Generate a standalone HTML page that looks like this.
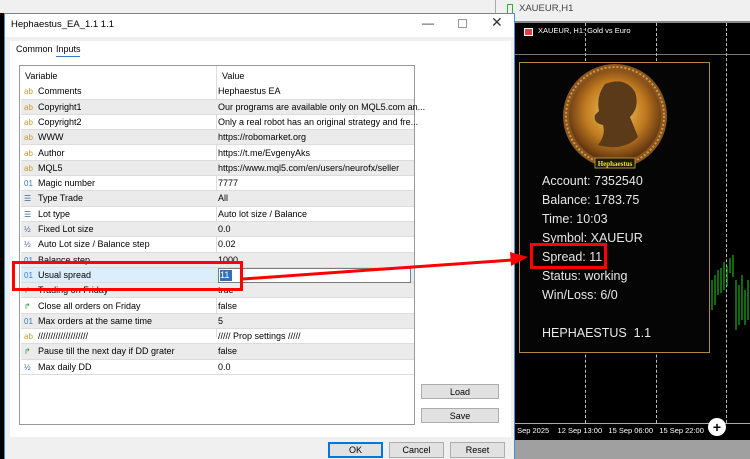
<!DOCTYPE html>
<html><head><style>
*{margin:0;padding:0;box-sizing:border-box}
body{width:750px;height:459px;overflow:hidden;position:relative;background:#000;font-family:"Liberation Sans",sans-serif;font-size:9px;color:#000}
.a{position:absolute}
.row{position:absolute;left:21px;width:393px;height:15.3px;border-bottom:1px solid #dcdcdc;line-height:15px;white-space:nowrap}
.row.g{background:#ebebeb}
.row span.n{position:absolute;left:17px}
.row span.v{position:absolute;left:197px}
.row i{position:absolute;left:3px;font-style:normal;font-size:8px;color:#c89a3a}
.row i.b{color:#3a7ac8}
.row i.p{color:#30a040}
.row i.t{color:#4060a0}
.btn{position:absolute;background:#e1e1e1;border:1px solid #adadad;text-align:center;line-height:14px;font-size:9px}
.ch{position:absolute;color:#e8e8e8;font-size:12.5px;left:542px}
</style></head><body>
<!-- top background strip -->
<div class="a" style="left:0;top:0;width:515px;height:13px;background:#f0f0f0"></div>
<div class="a" style="left:495px;top:0;width:255px;height:22px;background:#f0f0f0;border-left:1px solid #aaa"></div>
<div class="a" style="left:507px;top:4px;width:6px;height:10px;border:1px solid #30b030"></div>
<div class="a" style="left:519px;top:3px;color:#444;font-size:9.5px">XAUEUR,H1</div>
<div class="a" style="left:515px;top:21px;width:235px;height:2px;background:#888"></div>
<!-- chart -->
<div class="a" style="left:515px;top:23px;width:235px;height:400px;background:#000"></div>
<div class="a" style="left:524px;top:28px;width:9px;height:8px;background:#e04040;border:1px solid #fff"></div>
<div class="a" style="left:538px;top:26px;color:#fff;font-size:7.5px">XAUEUR, H1: Gold vs Euro</div>
<div class="a" style="left:515px;top:54px;width:235px;height:1px;background:#777"></div>
<div class="a" style="left:585px;top:23px;height:400px;border-left:1px dashed #bbb"></div>
<div class="a" style="left:656px;top:23px;height:400px;border-left:1px dashed #bbb"></div>
<div class="a" style="left:726px;top:23px;height:400px;border-left:1px dashed #bbb"></div>
<svg class="a" style="left:700px;top:250px" width="50" height="80"><g stroke="#20d020" stroke-width="1"><path d="M12 30v30M15 25v30M18 20v25M21 18v25M24 12v28M27 16v20M30 8v15M33 5v22M36 30v50M39 35v40M42 25v45M45 40v35M48 30v40"/></g></svg>
<!-- panel -->
<div class="a" style="left:519px;top:62px;width:191px;height:291px;background:#050505;border:1px solid #b08a40"></div>
<svg class="a" style="left:560px;top:64px" width="110" height="110"><defs><radialGradient id="g" cx="50%" cy="45%" r="55%"><stop offset="0" stop-color="#f5d060"/><stop offset=".6" stop-color="#c07a20"/><stop offset="1" stop-color="#5a3010"/></radialGradient></defs><circle cx="55" cy="52" r="52" fill="#8a5420"/><circle cx="55" cy="52" r="46" fill="url(#g)"/><circle cx="55" cy="52" r="49" fill="none" stroke="#d09a40" stroke-width="2" stroke-dasharray="2 2"/><path d="M45 20q20-8 30 8q5 15-5 25l8 20q-15 15-40 8q8-10 5-20q-10-2-8-10l4-4q-3-15 6-27z" fill="#5a3a18"/><rect x="35" y="94" width="40" height="10" fill="#1a1a00" stroke="#b08a40"/><text x="55" y="102" font-size="7" font-family="Liberation Serif" fill="#f0e040" text-anchor="middle" font-weight="bold">Hephaestus</text></svg>
<div class="ch" style="top:174px">Account: 7352540</div>
<div class="ch" style="top:193px">Balance: 1783.75</div>
<div class="ch" style="top:212px">Time: 10:03</div>
<div class="ch" style="top:231px">Symbol: XAUEUR</div>
<div class="ch" style="top:250px">Spread: 11</div>
<div class="ch" style="top:269px">Status: working</div>
<div class="ch" style="top:288px">Win/Loss: 6/0</div>
<div class="ch" style="top:326px">HEPHAESTUS&nbsp;&nbsp;1.1</div>
<div class="a" style="left:530px;top:243px;width:77px;height:26px;border:3px solid #f00"></div>
<!-- time axis -->
<div class="a" style="left:515px;top:423px;width:235px;height:17px;background:#000;border-top:1px solid #aaa;color:#fff;font-size:7.5px;line-height:14px;white-space:nowrap">&nbsp;Sep 2025&nbsp;&nbsp;&nbsp; 12 Sep 13:00&nbsp;&nbsp; 15 Sep 06:00&nbsp;&nbsp; 15 Sep 22:00&nbsp;&nbsp; 16</div>
<div class="a" style="left:515px;top:440px;width:235px;height:19px;background:#a0a0a0"></div>
<div class="a" style="left:708px;top:418px;width:18px;height:18px;border-radius:50%;background:#fff;color:#000;text-align:center;font-size:14px;line-height:18px;font-weight:bold">+</div>
<!-- dialog -->
<div class="a" style="left:4px;top:13px;width:511px;height:446px;background:#f0f0f0;border-left:1px solid #4a90d0;border-top:1px solid #4a90d0;border-right:1px solid #4a90d0"></div>
<div class="a" style="left:5px;top:14px;width:509px;height:23px;background:#fff"></div>
<div class="a" style="left:11px;top:19px;font-size:9.5px">Hephaestus_EA_1.1 1.1</div>
<div class="a" style="left:422px;top:16px;font-size:12px;color:#333">—</div>
<div class="a" style="left:458px;top:19px;width:9px;height:9px;border:1px solid #999"></div>
<div class="a" style="left:491px;top:14px;font-size:14px;color:#333">✕</div>
<div class="a" style="left:10px;top:41px;width:501px;height:396px;background:#fff"></div>
<div class="a" style="left:16px;top:44px">Common</div>
<div class="a" style="left:56px;top:44px">Inputs</div>
<div class="a" style="left:56px;top:56px;width:24px;height:1px;background:#3a7ac8"></div>
<div class="a" style="left:19px;top:65px;width:396px;height:360px;border:1px solid #999;background:#fff"></div>
<div class="a" style="left:216px;top:66px;width:1px;height:271px;background:#dcdcdc"></div>
<div class="a" style="left:25px;top:71px">Variable</div>
<div class="a" style="left:222px;top:71px">Value</div>
<div class="row" style="top:84.3px"><i>ab</i><span class="n">Comments</span><span class="v">Hephaestus EA</span></div>
<div class="row g" style="top:99.6px"><i>ab</i><span class="n">Copyright1</span><span class="v">Our programs are available only on MQL5.com an...</span></div>
<div class="row" style="top:114.9px"><i>ab</i><span class="n">Copyright2</span><span class="v">Only a real robot has an original strategy and fre...</span></div>
<div class="row g" style="top:130.2px"><i>ab</i><span class="n">WWW</span><span class="v">https://robomarket.org</span></div>
<div class="row" style="top:145.5px"><i>ab</i><span class="n">Author</span><span class="v">https://t.me/EvgenyAks</span></div>
<div class="row g" style="top:160.8px"><i>ab</i><span class="n">MQL5</span><span class="v">https://www.mql5.com/en/users/neurofx/seller</span></div>
<div class="row" style="top:176.1px"><i class="b">01</i><span class="n">Magic number</span><span class="v">7777</span></div>
<div class="row g" style="top:191.4px"><i class="t">☰</i><span class="n">Type Trade</span><span class="v">All</span></div>
<div class="row" style="top:206.7px"><i class="t">☰</i><span class="n">Lot type</span><span class="v">Auto lot size / Balance</span></div>
<div class="row g" style="top:222px"><i class="t">½</i><span class="n">Fixed Lot size</span><span class="v">0.0</span></div>
<div class="row" style="top:237.3px"><i class="t">½</i><span class="n">Auto Lot size / Balance step</span><span class="v">0.02</span></div>
<div class="row g" style="top:252.6px"><i class="b">01</i><span class="n">Balance step</span><span class="v">1000</span></div>
<div class="row" style="top:267.9px;background:#dceefb"><i class="b">01</i><span class="n">Usual spread</span></div>
<div class="a" style="left:218px;top:268px;width:193px;height:15px;border:1px solid #7a7a7a;background:#fff"></div>
<div class="a" style="left:220px;top:270px;width:12px;height:11px;background:#3070c0;color:#fff;line-height:11px">11</div>
<div class="row g" style="top:283.2px"><i class="p">↱</i><span class="n">Trading on Friday</span><span class="v">true</span></div>
<div class="row" style="top:298.5px"><i class="p">↱</i><span class="n">Close all orders on Friday</span><span class="v">false</span></div>
<div class="row g" style="top:313.8px"><i class="b">01</i><span class="n">Max orders at the same time</span><span class="v">5</span></div>
<div class="row" style="top:329.1px"><i>ab</i><span class="n"><i style="position:static;color:#000;font-size:9px">////////////////////</i></span><span class="v"><i style="position:static;color:#000;font-size:9px">/////</i> Prop settings <i style="position:static;color:#000;font-size:9px">/////</i></span></div>
<div class="row g" style="top:344.4px"><i class="p">↱</i><span class="n">Pause till the next day if DD grater</span><span class="v">false</span></div>
<div class="row" style="top:359.7px"><i class="t">½</i><span class="n">Max daily DD</span><span class="v">0.0</span></div>
<div class="btn" style="left:421px;top:384px;width:78px;height:15px">Load</div>
<div class="btn" style="left:421px;top:408px;width:78px;height:15px">Save</div>
<div class="btn" style="left:328px;top:442px;width:55px;height:16px;border:2px solid #0078d7;line-height:12px">OK</div>
<div class="btn" style="left:389px;top:442px;width:55px;height:16px">Cancel</div>
<div class="btn" style="left:450px;top:442px;width:55px;height:16px">Reset</div>
<!-- red annotations -->
<div class="a" style="left:12px;top:261px;width:231px;height:30px;border:3px solid #f00"></div>
<svg class="a" style="left:0;top:0" width="750" height="459"><line x1="243" y1="279" x2="512" y2="260" stroke="#f00" stroke-width="3"/><polygon points="528,257 510,252 511,266" fill="#f00"/></svg>
</body></html>
